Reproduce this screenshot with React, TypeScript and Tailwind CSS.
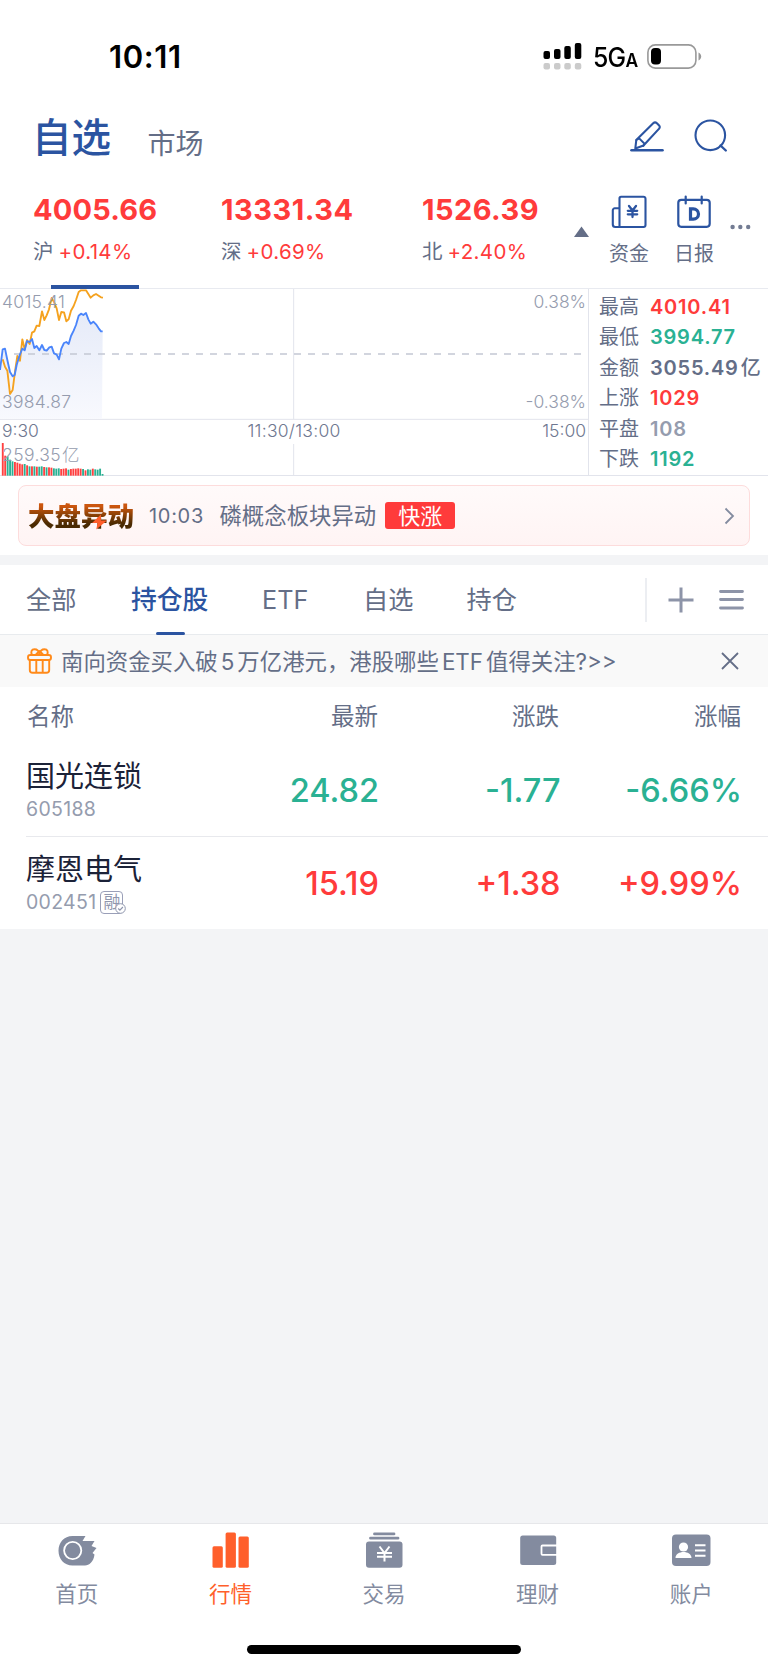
import { clsx } from "clsx";

const INDEXES = [
  { name: "沪", value: "4005.66", change: "+0.14%", width: "w-[188px] tracking-[0.150px]" },
  { name: "深", value: "13331.34", change: "+0.69%", width: "w-[201px] tracking-[0.500px]" },
  { name: "北", value: "1526.39", change: "+2.40%", width: "w-[152px] tracking-[0.450px]" },
];

const STATS = [
  { label: "最高", value: "4010.41", color: "text-[#ff3b3b]" },
  { label: "最低", value: "3994.77", color: "text-[#2ab193]" },
  { label: "金额", value: "3055.49", unit: "亿", color: "text-[#646e87]" },
  { label: "上涨", value: "1029", color: "text-[#ff3b3b]" },
  { label: "平盘", value: "108", color: "text-[#959cae]" },
  { label: "下跌", value: "1192", color: "text-[#2ab193]" },
];

const STOCKS = [
  { name: "国光连锁", code: "605188", price: "24.82", diff: "-1.77", pct: "-6.66%", up: false, margin: false },
  { name: "摩恩电气", code: "002451", price: "15.19", diff: "+1.38", pct: "+9.99%", up: true, margin: true },
];

// Intraday lines, three units per pixel
const PRICE_LINE =
  "0,300 8,238 15,236 22,270 30,306 38,319 44,315 50,285 58,258 67,236 74,241 81,213 89,216 96,207 103,234 110,228 118,241 126,225 133,240 140,242 148,232 155,230 162,250 170,254 177,268 184,236 192,219 199,216 206,222 213,198 221,182 228,165 236,137 243,131 250,135 258,129 265,148 272,161 280,155 288,163 296,175 303,184 308,184";
const LEAD_LINE =
  "8,268 15,290 22,302 30,372 38,360 45,305 52,258 60,272 67,208 74,238 81,210 89,222 96,188 103,184 110,167 118,168 126,124 133,150 140,136 147,118 155,84 162,96 170,115 177,150 184,126 192,127 199,154 206,148 213,122 221,108 228,90 236,66 243,61 258,61 265,72 272,83 280,76 288,72 296,77 303,82 309,83";

const VOLUMES = [98, 60, 58, 48, 43, 41, 39, 36, 34, 35, 31, 28, 28, 28, 27, 27, 28, 26, 25, 25, 24, 22, 21, 22, 20, 21, 22, 18, 20, 21, 21, 22, 21, 20, 16, 19, 18, 21, 19, 18, 21, 5];
const VOLUME_SIDES = "rrgggrrrrgrgrgrggrgrrgggrrrgrrrrrgrggrgggg";

function BoardIcon() {
  return (
    <svg className="h-9 w-9" viewBox="0 0 36 36" fill="none" stroke="#2b54a1" strokeWidth="2.100" strokeLinejoin="round" strokeLinecap="round">
      <path d="M8.500 32h24a2 2 0 0 0 2-2V3.700a2 2 0 0 0-2-2H10a1.500 1.500 0 0 0-1.500 1.500zM8.500 32H4.300a2.500 2.500 0 0 1-2.500-2.500V15.300a2 2 0 0 1 2-2H8.500" />
      <path d="M18 11l3.500 4.500 3.500-4.500M16.800 15.800h9.400M16.800 19.300h9.400M21.500 16v6" strokeWidth="2.300" />
    </svg>
  );
}

function DailyIcon() {
  return (
    <svg className="h-9 w-9" viewBox="0 0 36 36" fill="none" stroke="#2b54a1" strokeWidth="2.200" strokeLinejoin="round" strokeLinecap="round">
      <rect x="2.300" y="4.800" width="31.400" height="27" rx="3" />
      <path d="M9.700 1.500v7M25.700 1.500v7" />
      <path d="M14.500 13.800h2.800a5.200 5.200 0 0 1 0 10.400h-2.800z" strokeWidth="3.200" strokeLinejoin="miter" />
    </svg>
  );
}

function Chart() {
  return (
    <div className="relative h-[187px] w-[589px] shrink-0 border-r border-[#e2e4ec]">
      <svg className="block h-[187px] w-[588px]" viewBox="0 57 1764 561" preserveAspectRatio="none">
        <defs>
          <linearGradient id="area" x1="0" y1="0" x2="0" y2="1">
            <stop offset="0" stopColor="#e6ebf8" />
            <stop offset="1" stopColor="#f8f9fe" />
          </linearGradient>
        </defs>
        <g stroke="#e2e4ec" strokeWidth="3">
          <path d="M881 57V448M881 522V616M0 448H1764M0 616.500H1764" />
        </g>
        <polygon points={`0,446 ${PRICE_LINE} 306,446`} fill="url(#area)" />
        <path d="M42 252H1764" stroke="#c4c8d4" strokeWidth="5" strokeDasharray="21 21" />
        <g fill="none" strokeWidth="5.600" strokeLinejoin="round">
          <polyline points={LEAD_LINE} stroke="#f5a21f" />
          <polyline points={PRICE_LINE} stroke="#4a85fb" />
        </g>
        {VOLUMES.map((v, i) => (
          <rect key={i} x={5.5 + i * 7.3} y={617 - v} width="5.600" height={v} fill={VOLUME_SIDES[i] === "r" ? "#ff4040" : "#2ab193"} />
        ))}
      </svg>
      <div className="absolute inset-0 text-[17.500px] leading-5 font-light text-[#959cae]">
        <span className="absolute top-[3px] left-0.5 tracking-[0.300px]">4015.41</span>
        <span className="absolute top-[103px] left-0.5 tracking-[0.300px]">3984.87</span>
        <span className="absolute top-[3px] right-0.5">0.38%</span>
        <span className="absolute top-[103px] right-0.5">-0.38%</span>
        <span className="absolute top-[156px] left-0.5 tracking-[0.400px]">259.35<span className="ml-px">亿</span></span>
        <div className="absolute top-[132px] left-0 flex w-full justify-between pr-0.5 pl-0.5 text-[#6f7890]">
          <span>9:30</span>
          <span className="absolute left-1/2 -translate-x-1/2 tracking-[0.250px]">11:30/13:00</span>
          <span>15:00</span>
        </div>
      </div>
    </div>
  );
}

function StockRow({ stock }: { stock: (typeof STOCKS)[number] }) {
  return (
    <div className={clsx("flex h-[92.500px] items-center pt-[3px] text-[32.500px] font-medium", stock.up ? "text-[#ff3b3b]" : "text-[#2ab193]")}>
      <div className="w-[160px]">
        <div className="text-[29px] leading-9 font-normal text-[#1b2238]">{stock.name}</div>
        <div className="flex h-7 items-center text-[19.500px] font-normal tracking-[0.300px] text-[#959cae]">
          {stock.code}
          {stock.margin && (
            <span className="relative ml-[4px] flex h-[23px] w-[23px] items-center justify-center rounded-[4px] border border-[#9a9fb8] text-[17px] leading-none tracking-normal text-[#8f96ad]">
              融
              <svg className="absolute -right-[4px] -bottom-px h-[11px] w-[11px]" viewBox="0 0 11 11" fill="none" stroke="#8f96ad">
                <circle cx="5.500" cy="5.500" r="4.800" fill="#fff" />
                <path d="M3.200 5.500l1.700 1.700 3-3.200" strokeWidth="1.200" />
              </svg>
            </span>
          )}
        </div>
      </div>
      <div className="w-[193px] text-right">{stock.price}</div>
      <div className="w-[181.500px] text-right">{stock.diff}</div>
      <div className="w-[181.500px] text-right">{stock.pct}</div>
    </div>
  );
}

function NavItem({ label, active, children }: { label: string; active?: boolean; children: React.ReactNode }) {
  return (
    <div className={clsx("flex flex-1 flex-col items-center pt-[7px] text-[21.500px]", active ? "text-[#ff5f2b]" : "text-[#838b9f]")}>
      <svg className="h-10 w-10" viewBox="0 0 40 40" fill="currentColor">
        {children}
      </svg>
      <span className="mt-[8px] leading-[30px]">{label}</span>
    </div>
  );
}

export default function App() {
  return (
    <div className="flex h-[1669px] w-[768px] flex-col overflow-hidden bg-white font-['Inter','Noto_Sans_CJK_SC',sans-serif] text-[#646e87]">
      {/* Status bar */}
      <div className="flex h-[100px] items-start justify-between pt-[41px] pr-[66px] pl-[109px] text-black">
        <span className="text-[31px] leading-8 font-semibold tracking-[0.600px]">10:11</span>
        <div className="flex items-start">
          <svg className="mt-0.5 h-[27px] w-[39px]" viewBox="0 0 39 27">
            <g fill="#000">
              <rect x="0.500" y="8" width="6.500" height="8" rx="2" />
              <rect x="11" y="6" width="6.500" height="10" rx="2" />
              <rect x="21.300" y="3" width="6.500" height="13" rx="2" />
              <rect x="31.800" y="0" width="6.500" height="16" rx="2" />
            </g>
            <g fill="#cbcbcb">
              <rect x="0.500" y="20" width="6.500" height="6.500" rx="2" />
              <rect x="11" y="20" width="6.500" height="6.500" rx="2" />
              <rect x="21.300" y="20" width="6.500" height="6.500" rx="2" />
              <rect x="31.800" y="20" width="6.500" height="6.500" rx="2" />
            </g>
          </svg>
          <span className="mt-px ml-[11px] w-[43px] origin-left scale-x-[0.920] text-[27px] leading-8 font-medium tracking-[-0.800px] whitespace-nowrap">
            5G<span className="text-[19px] font-semibold">A</span>
          </span>
          <svg className="mt-[3px] ml-[11px] h-[25px] w-[55px]" viewBox="0 0 55 25">
            <rect x="0.900" y="0.900" width="48" height="23.200" rx="7.500" fill="none" stroke="#999" strokeWidth="1.600" />
            <path d="M51.500 8.500c3.600 1.400 3.600 6.600 0 8z" fill="#999" />
            <rect x="4" y="4" width="10" height="16.500" rx="4" fill="#000" />
          </svg>
        </div>
      </div>

      {/* Title */}
      <div className="flex h-[70px] pr-10 pl-[32px]">
        <h1 className="mt-[15px] text-[39.500px] leading-[46px] font-medium text-[#2b54a1]">自选</h1>
        <span className="mt-[24px] ml-[36.500px] text-[28px] leading-10">市场</span>
        <div className="mt-[19px] ml-auto flex gap-[30px]">
          <svg className="h-[34px] w-[34px]" viewBox="0 0 34 34" fill="none" stroke="#2b54a1" strokeWidth="2.100" strokeLinejoin="round" strokeLinecap="round">
            <path d="M1.500 31.200h31" strokeWidth="2.600" />
            <path d="M5.300 29.500l1-8.500L23.200 4.200c1.200-1.200 2.500-1.200 3.700 0l2 2c1.200 1.200 1.200 2.500 0 3.700L13.500 26.500z" />
            <path d="M6.300 21l3-1.500 5 5-1 2.500" strokeWidth="1.800" />
          </svg>
          <svg className="h-[34px] w-[34px]" viewBox="0 0 34 34" fill="none" stroke="#2b54a1" strokeWidth="2.100" strokeLinecap="round">
            <circle cx="16.300" cy="16.300" r="14.800" />
            <path d="M26.500 26.500l5.300 5" strokeWidth="2.400" />
          </svg>
        </div>
      </div>

      {/* Index summary */}
      <div className="relative flex h-[119px] border-b border-[#e8eaf0] pl-[33px]">
        {INDEXES.map((item) => (
          <div key={item.name} className={clsx("pt-[23.500px]", item.width)}>
            <div className="text-[29px] leading-8 font-bold text-[#ff3b3b]">{item.value}</div>
            <div className="mt-[14.500px] flex text-[20.500px] leading-6 tracking-[0.350px]">
              <span className="w-[25.500px]">{item.name}</span>
              <span className="text-[#ff3b3b]">{item.change}</span>
            </div>
          </div>
        ))}
        <svg className="mt-[56px] h-[11px] w-[15px]" viewBox="0 0 15 11" fill="#646e87">
          <path d="M7.500 0.500L15 11H0z" />
        </svg>
        <div className="mt-[25px] ml-[20px] flex w-[40px] flex-col items-center text-[20px]">
          <BoardIcon />
          <span className="mt-[9.500px] leading-[26px]">资金</span>
        </div>
        <div className="mt-[25px] ml-[25px] flex w-[40px] flex-col items-center text-[20px]">
          <DailyIcon />
          <span className="mt-[9.500px] leading-[26px]">日报</span>
        </div>
        <svg className="mt-[54px] ml-[16px] h-[6px] w-[21px]" viewBox="0 0 21 6" fill="#737c93">
          <circle cx="2.600" cy="3" r="2.200" />
          <circle cx="10.300" cy="3" r="2.200" />
          <circle cx="18.200" cy="3" r="2.200" />
        </svg>
        <div className="absolute -bottom-px left-[51px] h-[4px] w-[88px] bg-[#2b54a1]" />
      </div>

      {/* Intraday chart and market breadth */}
      <div className="flex h-[187px] border-b border-[#e2e4ec]">
        <Chart />
        <div className="pt-[2.500px] pl-[10px] text-[20px]">
          {STATS.map((s) => (
            <div key={s.label} className="flex h-[30.500px] items-center leading-none whitespace-nowrap">
              <span className="w-[51px]">{s.label}</span>
              <span className={clsx("font-semibold tracking-[0.800px]", s.color)}>{s.value}</span>
              {s.unit && <span className="ml-[2px] font-medium">{s.unit}</span>}
            </div>
          ))}
        </div>
      </div>

      {/* Market alert */}
      <div className="flex h-[79px] px-[18px] pt-[9px]">
        <div className="flex h-[61px] flex-1 items-center rounded-[8px] border border-[#fddcdc] bg-linear-to-b from-[#fffafa] to-[#fff4f4] pr-[14px] pl-[9px]">
          <div className="relative bg-linear-to-b from-[#cc560e] from-20% to-[#4a2a02] to-75% bg-clip-text text-[26.500px] leading-8 font-black text-transparent">
            大盘异动
            <svg className="absolute top-[14px] left-[64px] h-[16px] w-[15px]" viewBox="0 0 16 16" fill="#ff5f2b">
              <path d="M9.500 0L0 9h6l-1.500 7L16 6.500h-6.500z" />
            </svg>
          </div>
          <span className="ml-[15px] text-[20px] tracking-[0.700px]">10:03</span>
          <span className="ml-[15.500px] text-[22.400px]">磷概念板块异动</span>
          <span className="ml-[9px] flex h-[27px] w-[70px] items-center justify-center rounded-[3px] bg-[#ff3b3b] text-[22px] leading-none text-white">快涨</span>
          <svg className="ml-auto h-[18px] w-[11px]" viewBox="0 0 11 18" fill="none" stroke="#838b9f" strokeWidth="1.800">
            <path d="M1.500 1.500L9 9l-7.500 7.500" />
          </svg>
        </div>
      </div>
      <div className="h-[10px] bg-[#f3f4f6]" />

      {/* Watchlist groups */}
      <div className="flex h-[70px] items-center border-b border-[#e8ebee] pr-6 pl-[26px] text-[25.200px]">
        <span className="w-[105px] pt-[2px]">全部</span>
        <span className="relative flex h-full w-[131px] items-center pt-[2px] text-[25.800px] font-medium text-[#2b54a1]">
          持仓股
          <i className="absolute -bottom-px left-[25px] h-[3px] w-[29px] rounded-sm bg-[#2b54a1]" />
        </span>
        <span className="w-[101px] pt-[2px]">ETF</span>
        <span className="w-[103.500px] pt-[2px]">自选</span>
        <span className="pt-[2px]">持仓</span>
        <div className="ml-auto h-[44px] w-[2px] bg-[#eceef2]" />
        <svg className="ml-[21px] h-[26px] w-[26px]" viewBox="0 0 26 26" stroke="#8d94a8" strokeWidth="3">
          <path d="M13 0.500v25M0.500 13h25" />
        </svg>
        <svg className="ml-[25px] h-[26px] w-[25px]" viewBox="0 0 25 26" stroke="#8d94a8" strokeWidth="2.800" strokeLinecap="round">
          <path d="M1.500 4.500h22M1.500 12.500h22M1.500 21h22" />
        </svg>
      </div>

      {/* Promo notice */}
      <div className="flex h-[52px] items-center bg-[#f9f9f9] pr-[29px] pl-[27px] text-[22.400px]">
        <svg className="h-[26px] w-[25px]" viewBox="0 0 25 26" fill="none" stroke="#ff8a1a" strokeWidth="1.900" strokeLinejoin="round">
          <rect x="1" y="7" width="23" height="5" rx="2.300" />
          <path d="M2.800 12v10a2.800 2.800 0 0 0 2.800 2.800h13.800a2.800 2.800 0 0 0 2.800-2.800V12M9.300 13v11.500M15.700 13v11.500M5 7C3.500 4 4.500 1.200 7.500 1.200S12 3.500 12.500 6c.5-2.500 2-4.800 5-4.800S21.500 4 20 7M9 6.500l3.500-3.500 3.500 3.500" />
        </svg>
        <span className="ml-[9px] pt-[2px] whitespace-nowrap">
          南向资金买入破<span className="mx-[3px]">5</span>万亿港元，港股哪些<span className="mx-[3px]">ETF</span>值得关注?&gt;&gt;
        </span>
        <svg className="ml-auto h-[18px] w-[18px]" viewBox="0 0 18 18" stroke="#646e87" strokeWidth="1.800">
          <path d="M1 1l16 16M17 1L1 17" />
        </svg>
      </div>

      {/* Holdings */}
      <div className="flex h-[57px] items-center pt-[2px] pl-[27px] text-[23.500px]">
        <span className="w-[160px]">名称</span>
        <span className="w-[191px] text-right">最新</span>
        <span className="w-[181px] text-right">涨跌</span>
        <span className="w-[182px] text-right">涨幅</span>
      </div>
      <div className="divide-y divide-[#e8e9ed] pl-[26px]">
        {STOCKS.map((stock) => (
          <StockRow key={stock.code} stock={stock} />
        ))}
      </div>
      <div className="flex-1 bg-[#f3f4f6]" />

      {/* Bottom navigation */}
      <div className="h-[146px] border-t border-[#e6e7ea]">
        <div className="flex">
          <NavItem label="首页">
            <path d="M15.500 5h13l-3 5h12l-3 5 5 2-4 5 2 1.500C36.500 31 32 34.500 28 34.500H15.500C7 34.500 1.500 28 1.500 19.800S7 5 15.500 5z" />
            <circle cx="15.700" cy="19.500" r="8.600" fill="none" stroke="#fff" strokeWidth="1.800" />
          </NavItem>
          <NavItem label="行情" active>
            <rect x="2.500" y="15.300" width="10.300" height="21.500" rx="1.500" />
            <rect x="15.600" y="1.500" width="10.300" height="35.300" rx="1.500" />
            <rect x="28.500" y="5.500" width="10.300" height="31.300" rx="1.500" />
          </NavItem>
          <NavItem label="交易">
            <path d="M10.500 1.500h19.500a1.300 1.300 0 0 1 0 2.800H10.500a1.300 1.300 0 0 1 0-2.800zM6.500 5.800h27.500a1.300 1.300 0 0 1 0 2.800H6.500a1.300 1.300 0 0 1 0-2.800z" />
            <rect x="2" y="10.500" width="36.500" height="26.300" rx="3" />
            <path d="M15.500 15.500l5 6.500 5-6.500M13 22h15M13 25.800h15M20.500 22v8.500" fill="none" stroke="#fff" strokeWidth="2" />
          </NavItem>
          <NavItem label="理财">
            <rect x="2.200" y="4.500" width="36" height="29.500" rx="2.500" />
            <path d="M39 14.500H24.500a1 1 0 0 0-1 1v7.300a1 1 0 0 0 1 1H39" fill="none" stroke="#fff" strokeWidth="1.800" />
          </NavItem>
          <NavItem label="账户">
            <rect x="1" y="3.500" width="38.500" height="31.500" rx="4" />
            <circle cx="12.500" cy="16" r="4.600" fill="#fff" />
            <path d="M4.500 27c0-8 16-8 16 0zM24 13.200h10.500v2H24zM24 18.500h10.500v2H24zM24 23.800h10.500v2H24z" fill="#fff" />
          </NavItem>
        </div>
        <div className="mx-auto mt-[36px] h-[9px] w-[274px] rounded-full bg-black" />
      </div>
    </div>
  );
}
